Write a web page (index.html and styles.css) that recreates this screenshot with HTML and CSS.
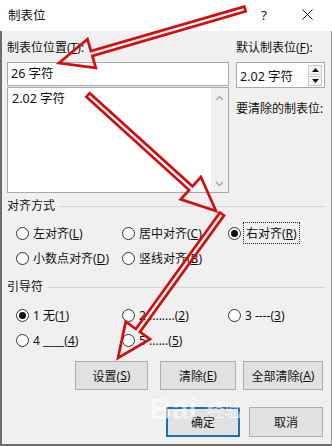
FILE: index.html
```html
<!DOCTYPE html>
<html lang="zh-CN">
<head>
<meta charset="utf-8">
<title>制表位</title>
<link rel="stylesheet" href="styles.css">
</head>
<body>
<div class="dlg">
  <div class="titlebar">
    <span class="title">制表位</span>
    <span class="help">?</span>
    <span class="close"><svg width="11" height="11" viewBox="0 0 11 11"><path d="M0.5 0.5L10.5 10.5M10.5 0.5L0.5 10.5" stroke="#111" stroke-width="1" fill="none"/></svg></span>
  </div>
  <div class="body">
    <div class="top">
      <div class="col-left">
        <div class="label">制表位位置(<u>T</u>):</div>
        <div class="input">26 字符</div>
        <div class="list">
          <div class="list-item">2.02 字符</div>
          <div class="scroll">
            <svg width="9" height="6" viewBox="0 0 9 6"><path d="M1 5L4.5 1.5L8 5" stroke="#a6a6a6" stroke-width="1.3" fill="none"/></svg>
            <svg width="9" height="6" viewBox="0 0 9 6"><path d="M1 1L4.5 4.5L8 1" stroke="#a6a6a6" stroke-width="1.3" fill="none"/></svg>
          </div>
        </div>
      </div>
      <div class="col-right">
        <div class="label">默认制表位(<u>F</u>):</div>
        <div class="spin">
          <span class="spin-val">2.02 字符</span>
          <div class="spin-btns">
            <div class="spin-btn"><svg width="7" height="4" viewBox="0 0 7 4"><path d="M0 4L3.5 0L7 4Z" fill="#111"/></svg></div>
            <div class="spin-btn"><svg width="7" height="4" viewBox="0 0 7 4"><path d="M0 0L3.5 4L7 0Z" fill="#111"/></svg></div>
          </div>
        </div>
        <div class="label clear-label">要清除的制表位:</div>
      </div>
    </div>

    <div class="group-head align-head"><span>对齐方式</span><span class="rule"></span></div>
    <div class="radio-grid align-grid">
      <div class="radio"><span class="dot"></span><span>左对齐(<u>L</u>)</span></div>
      <div class="radio"><span class="dot"></span><span>居中对齐(<u>C</u>)</span></div>
      <div class="radio"><span class="dot on"></span><span class="focus">右对齐(<u>R</u>)</span></div>
      <div class="radio"><span class="dot"></span><span>小数点对齐(<u>D</u>)</span></div>
      <div class="radio"><span class="dot"></span><span>竖线对齐(<u>B</u>)</span></div>
    </div>

    <div class="group-head leader-head"><span>引导符</span><span class="rule"></span></div>
    <div class="radio-grid leader-grid">
      <div class="radio"><span class="dot on"></span><span>1 无(<u>1</u>)</span></div>
      <div class="radio"><span class="dot"></span><span>2 ........(<u>2</u>)</span></div>
      <div class="radio"><span class="dot"></span><span>3 ----(<u>3</u>)</span></div>
      <div class="radio"><span class="dot"></span><span>4 ____(<u>4</u>)</span></div>
      <div class="radio"><span class="dot"></span><span>5 ......(<u>5</u>)</span></div>
    </div>

    <div class="btn-row row1">
      <div class="btn b-set">设置(<u>S</u>)</div>
      <div class="btn b-clear">清除(<u>E</u>)</div>
      <div class="btn b-all">全部清除(<u>A</u>)</div>
    </div>
    <div class="btn-row row2">
      <div class="btn b-ok default">确定</div>
      <div class="btn b-cancel">取消</div>
    </div>
  </div>

  <div class="watermark"><span class="wm-big">Bai</span><span class="wm-cn">经验</span></div>

  <svg class="arrows" width="332" height="446" viewBox="0 0 332 446">
    <g fill="none" stroke="#d10f0f" stroke-width="2.7" stroke-linejoin="miter">
      <polygon points="244.3,6.6 90.95,51.12 87.47,39.12 59,63 95.83,67.92 92.35,55.92 245.7,11.4"/>
      <polygon points="86.32,96.85 189.12,190.01 180.72,199.28 216,211 200.88,177.04 192.48,186.31 89.68,93.15"/>
      <polygon points="219.97,212.54 135.88,328.97 125.75,321.65 118,358 150.07,339.21 139.94,331.89 224.03,215.46"/>
    </g>
  </svg>
</div>
</body>
</html>
```

FILE: styles.css
```css
* { box-sizing: border-box; }
html, body { margin: 0; padding: 0; background: #f0f0f0; }
body {
  font-family: "Noto Sans", "Noto Sans CJK SC", sans-serif;
  font-size: 12px;
  color: #111;
}
u { text-decoration: underline; text-underline-offset: 1px; }

.dlg {
  position: relative;
  width: 332px;
  height: 446px;
  overflow: hidden;
  display: flex;
  flex-direction: column;
}

.titlebar {
  height: 31px;
  background: #ffffff;
  display: flex;
  align-items: center;
  padding: 0 0 2px 8px;
  flex: none;
}
.title { font-size: 12.5px; flex: 1; }
.help { width: 14px; font-size: 13px; margin-right: 31px; text-align: center; }
.close { width: 11px; height: 11px; margin-right: 19px; display: flex; }

.body {
  flex: 1;
  background: #f0f0f0;
  border-left: 2px solid #6d6d6d;
  border-right: 1px solid #9a9a9a;
  border-bottom: 2px solid #6d6d6d;
  padding: 9px 6px 0 5px;
  display: flex;
  flex-direction: column;
}

.label { height: 16px; line-height: 16px; white-space: nowrap; }

.top { display: flex; gap: 7px; }
.col-left { width: 222px; display: flex; flex-direction: column; }
.col-right { width: 89px; display: flex; flex-direction: column; }

.input {
  margin-top: 6px;
  height: 24px;
  background: #fff;
  border: 1px solid #a9a9a9;
  padding-left: 3px;
  line-height: 21px;
  font-size: 12.5px;
}
.list {
  margin-top: 1px;
  height: 106px;
  background: #fff;
  border: 1px solid #a9a9a9;
  display: flex;
}
.list-item { flex: 1; padding: 3px 0 0 4px; line-height: 16px; font-size: 12.5px; }
.scroll {
  width: 17px;
  background: #f0f0f0;
  display: flex;
  flex-direction: column;
  justify-content: space-between;
  align-items: center;
  padding: 7px 0 5px;
}

.spin {
  margin-top: 6px;
  height: 26px;
  background: #fff;
  border: 1px solid #a9a9a9;
  display: flex;
  align-items: center;
  padding-left: 3px;
}
.spin-val { flex: 1; font-size: 12.5px; }
.spin-btns { width: 14px; margin-right: 2px; display: flex; flex-direction: column; gap: 1px; }
.spin-btn {
  height: 10px;
  border: 1px solid #c8c8c8;
  background: #f4f4f4;
  display: flex;
  align-items: center;
  justify-content: center;
}
.clear-label { margin-top: 13px; }

.group-head { display: flex; align-items: center; height: 16px; line-height: 16px; gap: 4px; }
.group-head .rule { flex: 1; height: 1px; background: #d5d5d5; margin-top: 0; }
.align-head { margin-top: 5px; }
.leader-head { margin-top: 12px; }

.radio-grid {
  display: grid;
  grid-template-columns: 106px 106px 100px;
  row-gap: 7px;
  padding-left: 9px;
}
.align-grid { margin-top: 10px; }
.leader-grid { margin-top: 11px; }
.radio { display: flex; align-items: center; height: 18px; gap: 4px; white-space: nowrap; }
.dot {
  width: 13px; height: 13px;
  border: 1px solid #333;
  border-radius: 50%;
  background: #fff;
  flex: none;
  display: flex;
  align-items: center;
  justify-content: center;
}
.dot.on::after {
  content: "";
  width: 7px; height: 7px;
  border-radius: 50%;
  background: #111;
}
.focus { outline: 1px dotted #222; outline-offset: 1px; padding: 0 1px; }

.btn-row { display: flex; }
.row1 { margin-top: 12px; height: 29px; }
.row2 { margin-top: 17px; height: 30px; }
.btn {
  background: #e1e1e1;
  border: 1px solid #adadad;
  display: flex;
  align-items: center;
  justify-content: center;
  white-space: nowrap;
}
.b-set { margin-left: 68px; width: 73px; }
.b-clear { margin-left: 12px; width: 76px; }
.b-all { margin-left: 7px; width: 80px; }
.b-ok { margin-left: 159px; width: 74px; }
.b-cancel { margin-left: 9px; width: 74px; }
.btn.default { border: 2px solid #1e6fb0; }

.watermark {
  position: absolute;
  left: 150px;
  top: 392px;
  display: flex;
  align-items: center;
  gap: 10px;
  color: rgba(255, 255, 255, 0.6);
  pointer-events: none;
}
.wm-big { font-family: "Liberation Sans", sans-serif; font-size: 30px; font-weight: bold; }
.wm-cn { font-size: 18px; }

.arrows { position: absolute; left: 0; top: 0; pointer-events: none; }
```
